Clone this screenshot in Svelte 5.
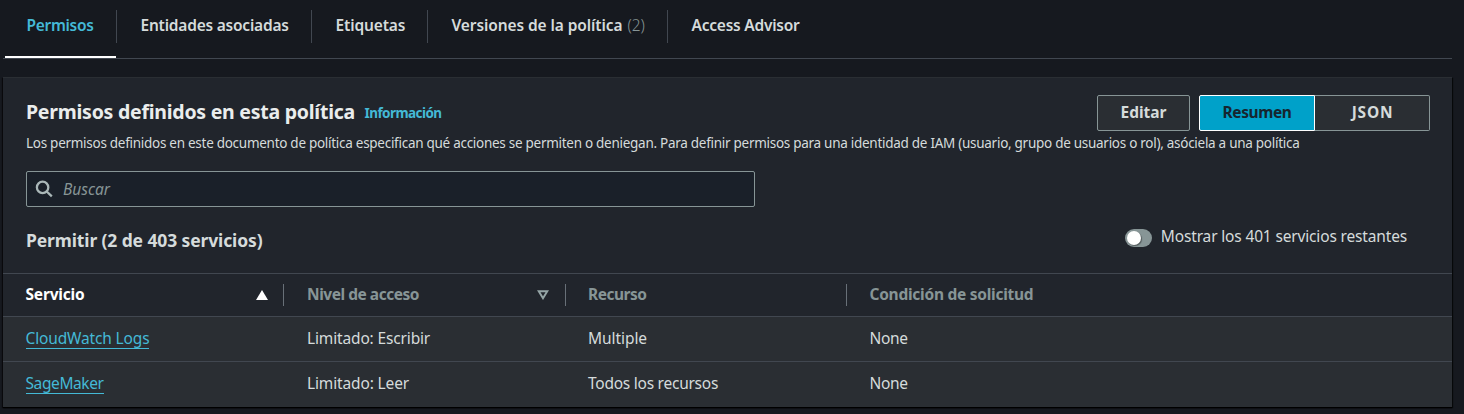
<script>
  const tabs = [
    { label: 'Permisos', ls: -0.3, w: 111, active: true },
    { label: 'Entidades asociadas', ls: -0.22, w: 194 },
    { label: 'Etiquetas', ls: -0.14, w: 115 },
    { label: 'Versiones de la política', ls: -0.1, w: 239, count: '(2)' },
    { label: 'Access Advisor', ls: -0.23, w: 160 }
  ];
  const columns = [
    { label: 'Servicio', ls: -0.19, sort: 'asc' },
    { label: 'Nivel de acceso', ls: -0.47, sort: 'none' },
    { label: 'Recurso', ls: -0.5 },
    { label: 'Condición de solicitud', ls: -0.26 }
  ];
  const rows = [
    [['CloudWatch Logs', -0.15], ['Limitado: Escribir', -0.15], ['Multiple', -0.06], ['None', -0.37]],
    [['SageMaker', -0.4], ['Limitado: Leer', -0.14], ['Todos los recursos', -0.25], ['None', -0.37]]
  ];
</script>

<div class="page">
  <nav class="tabs">
    {#each tabs as tab}
      <div class="tab" class:active={tab.active} style:width="{tab.w}px">
        <span style:letter-spacing="{tab.ls}px">{tab.label}</span>
        {#if tab.count}<span class="count">{tab.count}</span>{/if}
      </div>
    {/each}
  </nav>

  <section class="panel">
    <header class="top">
      <div class="heading">
        <h2>Permisos definidos en esta política</h2>
        <a class="info" href="#info">Información</a>
      </div>
      <div class="actions">
        <button class="btn edit">Editar</button>
        <div class="segmented">
          <button class="btn selected">Resumen</button>
          <button class="btn json">JSON</button>
        </div>
      </div>
    </header>
    <p class="desc">Los permisos definidos en este documento de política especifican qué acciones se permiten o deniegan. Para definir permisos para una identidad de IAM (usuario, grupo de usuarios o rol), asóciela a una política</p>

    <div class="search">
      <svg width="18" height="18" viewBox="0 0 18 18" fill="none" stroke="#aab7b8" stroke-width="2.3">
        <circle cx="7.6" cy="7.4" r="5.7" />
        <path d="M11.7 11.5l5.1 4.9" />
      </svg>
      <span>Buscar</span>
    </div>

    <div class="summary">
      <h3>Permitir (2 de 403 servicios)</h3>
      <div class="toggle">
        <span class="switch"><span class="knob"></span></span>
        <span class="toggle-label">Mostrar los 401 servicios restantes</span>
      </div>
    </div>

    <div class="row head">
      {#each columns as col}
        <div class="cell" class:sorted={col.sort === 'asc'}>
          <span style:letter-spacing="{col.ls}px">{col.label}</span>
          {#if col.sort === 'asc'}
            <svg width="12" height="10" viewBox="0 0 12 10"><path d="M6 0L12 10H0z" fill="#fff" /></svg>
          {:else if col.sort}
            <svg width="12" height="10" viewBox="0 0 12 10"><path d="M1.7 1.2h8.6L6 8.2z" fill="none" stroke="#95a5a6" stroke-width="2" /></svg>
          {/if}
        </div>
      {/each}
    </div>
    {#each rows as row}
      <div class="row body">
        {#each row as [text, ls], i}
          <div class="cell">
            {#if i === 0}
              <a href="#service" style:letter-spacing="{ls}px">{text}</a>
            {:else}
              <span style:letter-spacing="{ls}px">{text}</span>
            {/if}
          </div>
        {/each}
      </div>
    {/each}
  </section>
</div>

<style>
  :global(body) { margin: 0; background: #16191f; }
  .page {
    box-sizing: border-box;
    height: 414px;
    padding: 0 12px 0 3px;
    overflow: hidden;
    background: #16191f;
    color: #d5dbdb;
    font: 15.5px/20px "Noto Sans", "Open Sans", sans-serif;
    white-space: nowrap;
  }
  h2, h3, p { margin: 0; }
  a { color: #44b9d6; text-decoration: none; }

  .tabs { display: flex; height: 58px; padding-left: 2px; border-bottom: 1px solid #414750; }
  .tab {
    position: relative;
    box-sizing: border-box;
    display: flex;
    gap: 5px;
    padding: 15px 0 0 23.5px;
    border-bottom: 2px solid transparent;
    font-weight: 650;
  }
  .tab + .tab { margin-left: 1px; }
  .tab:not(:last-child)::after {
    content: '';
    position: absolute;
    right: -1px;
    top: 10px;
    width: 1px;
    height: 33px;
    background: #414750;
  }
  .tab.active { padding-left: 21.5px; color: #44b9d6; border-bottom-color: #fff; }
  .count { color: #879596; font-weight: 300; }

  .panel {
    box-sizing: border-box;
    height: 330px;
    margin-top: 18px;
    border-top: 1px solid #2a2e33;
    background: #21252c;
    box-shadow: 0 1px 1px #000, 1px 1px 1px rgba(0, 0, 0, .6), -1px 1px 1px rgba(0, 0, 0, .5);
  }
  .top { display: flex; justify-content: space-between; padding: 17px 22px 0 23px; height: 36px; }
  .heading { display: flex; gap: 9.5px; align-items: center; height: 34px; }
  h2 { color: #eaeded; font-size: 19.5px; letter-spacing: -.245px; line-height: 34px; }
  .info { font-size: 13.5px; font-weight: 700; letter-spacing: -.56px; padding-top: 1px; }
  .actions { display: flex; gap: 9px; }
  .btn {
    box-sizing: border-box;
    height: 36px;
    padding: 0 0 2px;
    border: 1px solid #879596;
    border-radius: 2px;
    background: #2a2e33;
    color: #d5dbdb;
    font: 700 15.5px/20px "Noto Sans", "Open Sans", sans-serif;
  }
  .edit { width: 93px; }
  .segmented { display: flex; }
  .selected { width: 116px; border-color: #fff; border-radius: 2px 0 0 2px; background: #00a1c9; color: #16252f; letter-spacing: -.38px; }
  .json { width: 115px; padding-left: 1px; border-left: 0; border-radius: 0 2px 2px 0; letter-spacing: .8px; }
  .desc { padding: 2px 0 0 23px; font-size: 13.5px; line-height: 20px; letter-spacing: -.277px; }

  .search {
    box-sizing: border-box;
    display: flex;
    align-items: center;
    gap: 10px;
    width: 729px;
    height: 36px;
    margin: 18px 0 0 23px;
    padding-left: 8px;
    border: 1px solid #879596;
    border-radius: 2px;
    background: #1a2029;
    color: #879596;
    font-style: italic;
  }

  .summary { display: flex; justify-content: space-between; height: 66px; padding: 0 45px 0 23px; }
  h3 { padding-top: 23px; font-size: 17.5px; line-height: 20px; letter-spacing: -.12px; }
  .toggle { display: flex; gap: 9px; padding-top: 19px; }
  .switch { box-sizing: border-box; width: 27px; height: 18px; margin-top: 3px; padding: 2px; border-radius: 9px; background: #879596; }
  .knob { display: block; width: 14px; height: 14px; border-radius: 50%; background: #fff; box-shadow: 1px 1px 1px rgba(0, 0, 0, .4); }
  .toggle-label { letter-spacing: -.16px; }

  .row { display: grid; grid-template-columns: 281px 282px 281px 1fr; box-sizing: border-box; border-top: 1px solid #414750; }
  .cell { position: relative; display: flex; align-items: center; padding-left: 22.5px; }
  .cell:nth-child(2) { padding-left: 23px; }
  .cell:nth-child(3) { padding-left: 22px; }
  .head { height: 43px; color: #879596; font-weight: 700; }
  .head .cell { justify-content: space-between; padding-right: 16px; padding-bottom: 2px; }
  .head .cell:nth-child(2) { padding-right: 17px; }
  .head svg { position: relative; top: 1px; }
  .head .cell:not(:last-child)::after {
    content: '';
    position: absolute;
    right: 0;
    top: 10px;
    width: 1px;
    height: 22px;
    background: #687078;
  }
  .head .sorted { color: #fff; }
  .body { height: 45px; background: #2a2e33; }
  .body:last-child { height: 46px; }
  .body .cell { align-items: flex-start; padding-top: 11px; }
  .body a { line-height: 20px; border-bottom: 1px solid #44b9d6; }
</style>
